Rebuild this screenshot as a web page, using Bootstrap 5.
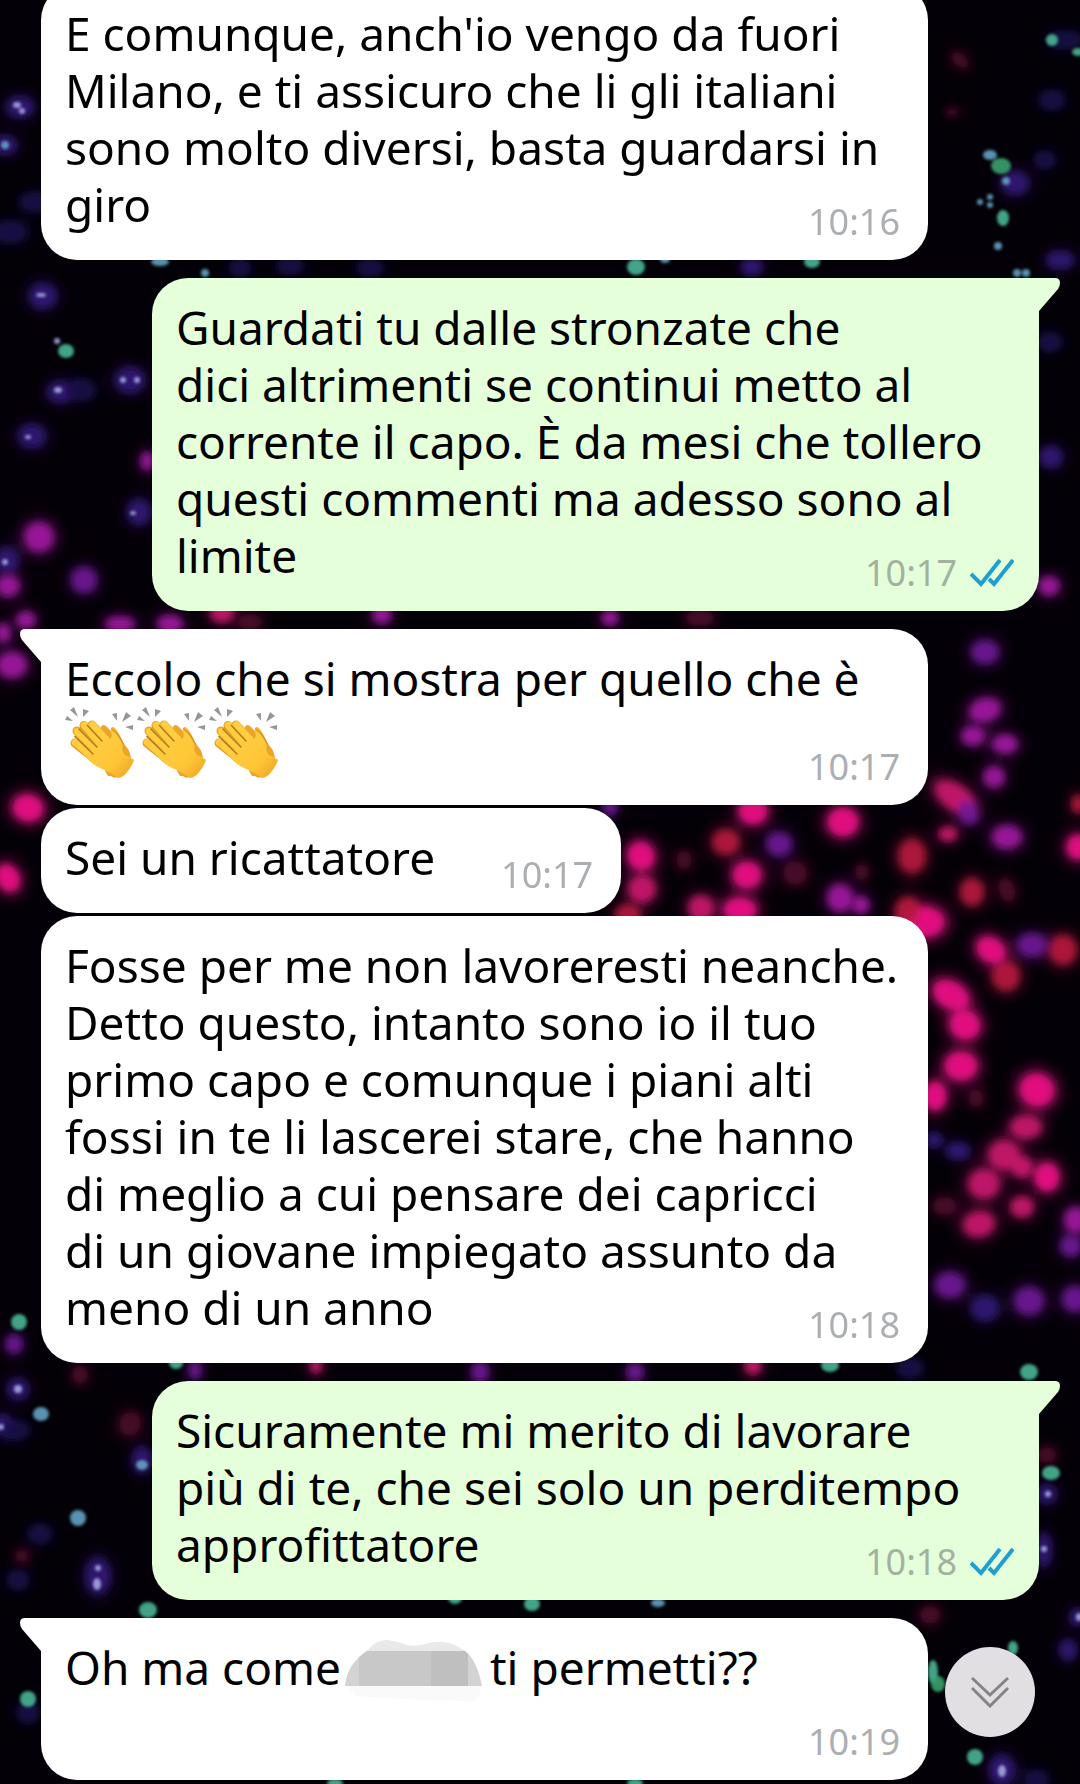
<!DOCTYPE html>
<html lang="it">
<head>
<meta charset="utf-8">
<meta name="viewport" content="width=device-width, initial-scale=1">
<title>Chat</title>
<link href="https://cdn.jsdelivr.net/npm/bootstrap@5.3.0/dist/css/bootstrap.min.css" rel="stylesheet">
<style>
  body {
    font-family: "Noto Sans", "Open Sans", sans-serif;
    font-size: 46px;
    line-height: 57px;
    color: #000;
    background: #040007;
  }
  .wallpaper { z-index: 0; }
  .chat { height: 100vh; padding: 0 41px 4px; z-index: 1; }
  .bubble {
    display: grid;
    width: 887px;
    max-width: 100%;
    padding: 21px 28px 27px 24px;
    border-radius: 36px;
    background: #fff;
    margin-top: 3px;
    flex: none;
  }
  .bubble > p, .bubble > div, .bubble > .stamp { grid-area: 1 / 1; }
  .bubble-first { margin-top: 18px; }
  .bubble-out { background: #e5ffdb; padding-right: 25px; }
  .bubble-in.bubble-first { border-top-left-radius: 0; }
  .bubble-out.bubble-first { border-top-right-radius: 0; }
  .bubble-short { display: flex; width: auto; gap: 66px; }
  .stamp {
    font-size: 36px;
    line-height: 36px;
    color: #acafb1;
    margin-bottom: -7px;
    place-self: end;
    gap: 13px;
  }
  .bubble-out .stamp { color: #a3b19f; }
  .tail { top: 0; width: 22px; height: 34px; }
  .bubble-in .tail { left: -21px; }
  .bubble-out .tail { right: -21px; }
  .claps { height: 71px; }
  .with-blank { min-height: 114px; }
  .censored { margin: 1px 7px 0 4px; overflow: visible; }
  .to-bottom {
    right: 45px;
    bottom: 47px;
    width: 90px;
    height: 90px;
    background: #e1dfe2;
    z-index: 2;
  }
</style>
</head>
<body class="overflow-hidden">

<svg class="wallpaper position-fixed top-0 start-0 w-100 h-100" viewBox="0 0 1080 1784" preserveAspectRatio="xMidYMid slice" aria-hidden="true">
  <defs>
    <filter id="halo" x="-5%" y="-5%" width="110%" height="110%"><feGaussianBlur stdDeviation="7"/></filter>
    <filter id="cell" x="-5%" y="-5%" width="110%" height="110%"><feGaussianBlur stdDeviation="3.5"/></filter>
    <filter id="spot" x="-5%" y="-5%" width="110%" height="110%"><feGaussianBlur stdDeviation="1.8"/></filter>
  </defs>
  <g id="halos" filter="url(#halo)"></g>
  <g id="cells" filter="url(#cell)"></g>
  <g id="spots" filter="url(#spot)"></g>
</svg>

<svg width="0" height="0" class="position-absolute" aria-hidden="true">
  <defs>
    <linearGradient id="palm" x1="0" y1="0" x2="1" y2="1">
      <stop offset="0" stop-color="#ffd042"/><stop offset=".65" stop-color="#fdc637"/><stop offset="1" stop-color="#ee9f22"/>
    </linearGradient>
    <symbol id="clap" viewBox="0 0 72 72">
      <g fill="#959698">
        <path d="M0 13 2 9 8 14ZM5 3 9 0 13 10ZM18 2 24 4 18 10ZM47 7 52 6 52 14ZM61 5 66 9 57 15ZM60 20 68 18 68 23Z"/>
      </g>
      <path d="M36 20Q38 16 42 20L48 26Q44 20 48 20Q52 21 57 34L63 42Q66 47 66 54L56 68Q50 73 46 69L43 69 40 64Z" fill="#eda427"/>
      <g stroke="#e39a25" stroke-width="9" stroke-linecap="round">
        <path d="M27 18 46 38M19 18.500 40 42M12 24 34 46M10 36 30 52"/>
      </g>
      <g stroke="#ffce40" stroke-width="7.500" stroke-linecap="round">
        <path d="M27.500 18 46 38M19.500 18.500 40 42M12.500 24.500 34 46M10.500 35.500 30 52"/>
      </g>
      <path d="M20 49Q28 59 40 63Q46 66 53 71Q58 71 63 64Q68 57 69 53Q64 49 60 48Q56 44 58 38Q56 27 49 21Q45 20 46 25Q48 29 45 32L40 30 26 42Z" fill="url(#palm)"/>
      <g fill="none" stroke="#b97a1a" stroke-width="1.700" stroke-linecap="round">
        <path d="M22.500 18.500 37 34M14 22 32 40M10 29.500 28 47"/>
        <path d="M47 22Q54 27 58 37" stroke="#dd9526"/>
      </g>
    </symbol>
  </defs>
</svg>

<main class="chat position-relative d-flex flex-column justify-content-end align-items-start">

  <article class="bubble bubble-in">
    <p class="m-0">E comunque, anch'io vengo da fuori<br>Milano, e ti assicuro che li gli italiani<br>sono molto diversi, basta guardarsi in<br>giro</p>
    <time class="stamp">10:16</time>
  </article>

  <article class="bubble bubble-out bubble-first position-relative align-self-end">
    <svg class="tail position-absolute" viewBox="0 0 22 34" aria-hidden="true"><path d="M0 0H17Q22 0 22 5Q22 8 20 11L1 33H0Z" fill="#e5ffdb"/></svg>
    <p class="m-0">Guardati tu dalle stronzate che<br>dici altrimenti se continui metto al<br>corrente il capo. È da mesi che tollero<br>questi commenti ma adesso sono al<br>limite</p>
    <div class="stamp d-flex align-items-center">
      <time>10:17</time>
      <svg width="44" height="28" viewBox="0 0 44 28" fill="none" stroke="#1f9fd0" stroke-width="4" role="img" aria-label="Letto"><path d="M1 15 11 25 30 1M19 20 24 25 43 1"/></svg>
    </div>
  </article>

  <article class="bubble bubble-in bubble-first position-relative">
    <svg class="tail position-absolute" viewBox="0 0 22 34" aria-hidden="true"><path d="M22 0H5Q0 0 0 5Q0 8 2 11L21 33H22Z" fill="#fff"/></svg>
    <div>
      <p class="m-0">Eccolo che si mostra per quello che è</p>
      <div class="claps d-flex" role="img" aria-label="Applauso">
        <svg width="72" height="72"><use href="#clap"/></svg>
        <svg width="72" height="72"><use href="#clap"/></svg>
        <svg width="72" height="72"><use href="#clap"/></svg>
      </div>
    </div>
    <time class="stamp">10:17</time>
  </article>

  <article class="bubble bubble-in bubble-short">
    <p class="m-0">Sei un ricattatore</p>
    <time class="stamp">10:17</time>
  </article>

  <article class="bubble bubble-in">
    <p class="m-0">Fosse per me non lavoreresti neanche.<br>Detto questo, intanto sono io il tuo<br>primo capo e comunque i piani alti<br>fossi in te li lascerei stare, che hanno<br>di meglio a cui pensare dei capricci<br>di un giovane impiegato assunto da<br>meno di un anno</p>
    <time class="stamp">10:18</time>
  </article>

  <article class="bubble bubble-out bubble-first position-relative align-self-end">
    <svg class="tail position-absolute" viewBox="0 0 22 34" aria-hidden="true"><path d="M0 0H17Q22 0 22 5Q22 8 20 11L1 33H0Z" fill="#e5ffdb"/></svg>
    <p class="m-0">Sicuramente mi merito di lavorare<br>più di te, che sei solo un perditempo<br>approfittatore</p>
    <div class="stamp d-flex align-items-center">
      <time>10:18</time>
      <svg width="44" height="28" viewBox="0 0 44 28" fill="none" stroke="#1f9fd0" stroke-width="4" role="img" aria-label="Letto"><path d="M1 15 11 25 30 1M19 20 24 25 43 1"/></svg>
    </div>
  </article>

  <article class="bubble bubble-in bubble-first position-relative">
    <svg class="tail position-absolute" viewBox="0 0 22 34" aria-hidden="true"><path d="M22 0H5Q0 0 0 5Q0 8 2 11L21 33H22Z" fill="#fff"/></svg>
    <p class="with-blank d-flex align-items-start m-0">
      <span>Oh ma come</span>
      <svg class="censored" width="138" height="62" viewBox="0 0 138 62" aria-hidden="true">
        <path d="M2 46H136L134 58Q128 63 118 61L60 59 10 56Z" fill="#fafafa"/>
        <path d="M22 11Q30 0 42 0Q52 1 62 5Q70 7 80 4Q94 0 104 3Q114 6 120 11Z" fill="#e9e9e9"/>
        <path d="M0 46Q2 24 22 11H120Q132 20 137 46Z" fill="#d3d3d3"/>
        <path d="M14 17 22 11H86V46H14Z" fill="#c8c8c8"/>
        <path d="M86 11H120L123 14V46H86Z" fill="#bfbfbf"/>
      </svg>
      <span>ti permetti??</span>
    </p>
    <time class="stamp">10:19</time>
  </article>

</main>

<button type="button" class="to-bottom btn position-fixed rounded-circle border-0 p-0 d-flex align-items-center justify-content-center" aria-label="Vai all'ultimo messaggio">
  <svg width="38" height="32" viewBox="0 0 38 32" fill="none" stroke="#858386" stroke-width="3"><path d="M1 2 19 19 37 2M1 12 19 30 37 12"/></svg>
</button>

<script src="https://cdn.jsdelivr.net/npm/bootstrap@5.3.0/dist/js/bootstrap.bundle.min.js"></script>
<script>
  // Wallpaper cells: colour -> [x, y, rx, ry, rotation]
  const cells = {
    '#f5138a': [[925,922,19,15,0],[951,995,19,13,30],[965,1025,15,14,20],[961,1066,16,14,0],[1037,1090,17,16,25],[1047,1177,12,14,0],[28,808,15,13,15],[8,878,11,14,-30],[843,822,15,14,0],[747,875,14,13,0],[740,910,16,12,0],[1078,847,11,12,0],[991,950,15,12,35],[641,856,13,14,-20],[935,1096,11,14,0],[753,811,14,13,0]],
    '#cf1670': [[1004,1155,15,14,0],[984,1184,15,14,0],[979,1224,15,12,-10],[642,889,13,13,0],[701,908,12,12,0],[222,613,11,9,0],[1022,1167,10,10,0],[1022,1207,11,10,0],[1026,1127,15,11,0],[948,834,9,7,0],[955,797,22,12,35],[316,1366,6,7,0],[753,1366,8,8,0]],
    '#bb1640': [[726,842,13,12,0],[912,856,13,16,0],[972,892,11,13,0],[1006,976,13,14,0],[1063,950,13,14,0],[628,914,12,9,0],[908,912,12,14,0],[1078,804,6,9,0]],
    '#a418a4': [[39,537,14,14,0],[985,710,15,11,-15],[973,736,11,9,0],[1005,744,12,9,0],[994,777,10,10,0],[840,898,12,13,0],[861,905,8,8,0],[1049,586,10,9,0],[1076,1220,11,12,0],[8,586,11,10,0],[3,633,7,9,0],[26,620,9,8,0],[12,665,14,12,0],[382,615,9,8,0],[1007,837,14,11,0],[120,624,14,7,0],[170,624,12,8,0],[147,461,6,9,0],[610,618,8,7,0]],
    '#71189a': [[985,652,13,11,0],[84,580,12,12,0],[968,812,9,12,-25],[779,844,12,11,0],[1032,945,14,11,0],[950,1285,14,12,0],[1029,1301,14,13,0],[1075,1299,12,12,0],[1071,1246,10,10,0],[480,1372,8,10,0],[635,1372,8,9,0],[610,808,7,7,0],[14,1344,8,9,0],[195,1370,6,9,0]],
    '#331678': [[43,296,13,12,0],[130,380,14,12,0],[32,436,13,11,0],[139,512,11,12,0],[20,107,13,10,0],[60,392,12,10,0],[7,560,11,12,0],[985,1308,13,12,0],[958,1151,11,8,0],[934,1140,8,7,0],[1051,457,11,10,0],[1060,260,13,8,0],[2,1425,9,10,0],[18,1389,10,10,0],[98,1576,12,17,0],[142,1460,9,12,0],[1044,1550,7,16,0],[1047,1494,9,9,0],[1078,1617,8,8,0],[752,267,10,8,0],[1015,183,13,11,0],[5,145,11,9,0],[1002,1770,12,14,0],[1068,1650,8,10,0]],
    '#17104a': [[35,202,14,9,0],[10,232,16,10,0],[1052,100,12,9,0],[1050,342,11,9,0],[240,268,10,8,0],[290,266,12,8,0],[370,268,12,8,0],[1045,160,10,8,0],[80,390,14,10,0],[40,1534,11,9,0],[18,1580,10,9,0],[14,1430,14,9,0],[910,1368,12,9,0],[1036,1780,12,9,0],[28,1712,10,10,0],[1065,40,16,8,0]],
    '#4d0a2a': [[684,860,8,9,0],[795,873,12,12,0],[960,60,10,6,40],[952,112,6,4,0],[976,1098,8,9,0],[862,872,7,8,0],[1007,890,8,12,-20],[945,1206,12,9,0],[130,1424,11,12,20],[80,1375,8,9,0],[22,1556,7,6,0],[930,1615,10,9,0],[1047,1455,9,8,0],[700,618,14,8,0],[250,622,12,8,0]]
  };
  // Bright spots inside and between the cells
  const spots = {
    '#48b695': [[1052,40,6,6],[1078,52,6,4],[66,351,8,7],[19,1322,8,8],[28,1699,8,8],[636,267,9,8],[812,262,8,6],[975,1757,8,8],[933,1672,5,12],[1013,1648,5,7],[1051,1473,9,7],[176,1363,7,6],[830,1365,9,7],[1029,1372,9,8],[1003,218,6,8],[335,1783,8,4],[635,1783,8,4],[532,1604,8,7],[148,1610,9,8],[455,1598,7,6]],
    '#37a26b': [[1001,166,10,8],[938,1684,7,8]],
    '#62a3c4': [[990,155,7,5],[1006,181,4,4],[980,202,3,3],[990,197,3,3],[990,205,3,3],[998,246,4,4],[1017,273,4,4],[1026,273,4,4],[41,1414,8,7],[78,1518,8,8],[142,1465,6,5],[5,145,4,4],[160,262,9,4],[205,273,4,4],[665,260,5,3],[658,1603,7,4]],
    '#a6a9e2': [[17,105,4,3],[22,111,3,3],[41,295,5,2],[58,390,4,3],[123,380,3,3],[137,380,3,3],[57,341,3,3],[28,437,3,2],[133,513,3,2],[5,562,3,3],[18,1389,4,4],[1,1427,3,3],[97,1584,4,6],[98,1568,3,3],[1079,1617,3,4],[1002,1771,4,6],[1044,1549,3,3],[1048,1494,3,3]]
  };
  function draw(id, groups, scale, opacity) {
    const g = document.getElementById(id);
    for (const [colour, list] of Object.entries(groups)) {
      for (const [x, y, rx, ry, turn = 0] of list) {
        const e = document.createElementNS('http://www.w3.org/2000/svg', 'ellipse');
        e.setAttribute('cx', x);
        e.setAttribute('cy', y);
        e.setAttribute('rx', rx * scale);
        e.setAttribute('ry', ry * scale);
        e.setAttribute('fill', colour);
        e.setAttribute('fill-opacity', opacity);
        e.setAttribute('transform', `rotate(${turn} ${x} ${y})`);
        g.append(e);
      }
    }
  }
  draw('halos', cells, 1.4, .45);
  draw('cells', cells, 1, .85);
  draw('spots', spots, 1, .9);
</script>
</body>
</html>
